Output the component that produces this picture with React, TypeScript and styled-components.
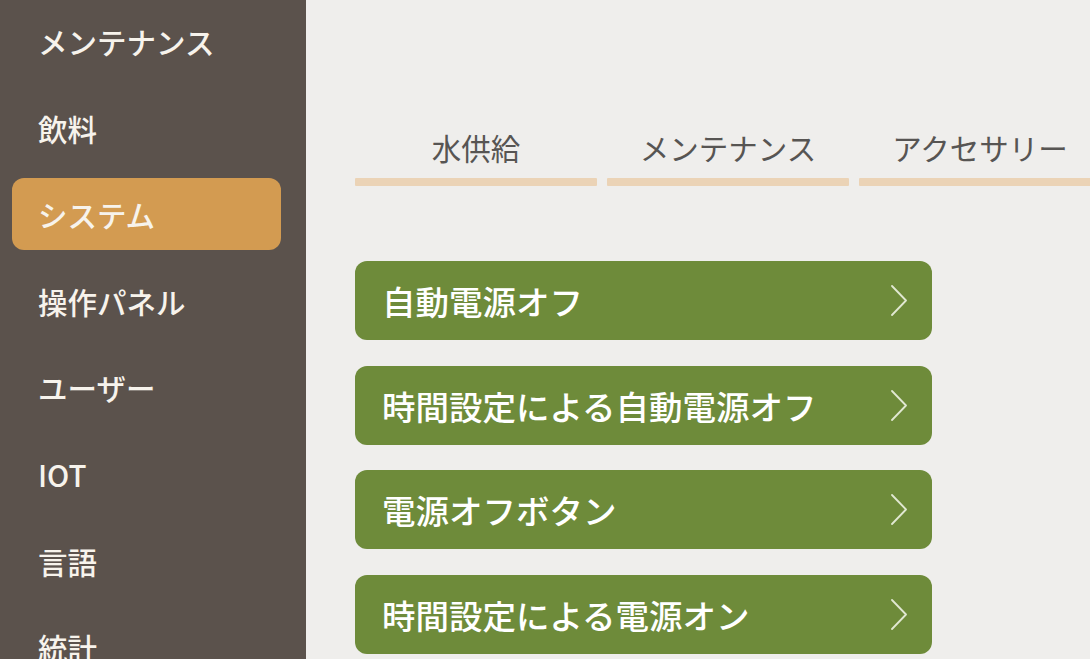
import React from 'react';
import styled, { createGlobalStyle } from 'styled-components';

const GlobalStyle = createGlobalStyle`
  html, body {
    margin: 0;
    padding: 0;
    height: 100%;
    overflow: hidden;
    background: #efeeec;
  }
  body {
    font-family: 'Noto Sans CJK JP', 'Noto Sans', sans-serif;
  }
`;

const Layout = styled.div`
  display: flex;
  height: 100vh;
`;

const Sidebar = styled.nav`
  flex: 0 0 306px;
  background: #5b524c;
  padding: 5px 25px 0 12px;
  box-sizing: border-box;
  display: flex;
  flex-direction: column;
  gap: 14.6px;
  overflow: hidden;
`;

const NavItem = styled.div<{ $active?: boolean }>`
  flex: 0 0 72px;
  display: flex;
  align-items: center;
  padding-left: 26px;
  border-radius: 12px;
  background: ${(p) => (p.$active ? '#d39b51' : 'transparent')};
  color: #f7f3ec;
  font-size: 29.5px;
  font-weight: 500;
  white-space: nowrap;
`;

const Main = styled.main`
  flex: 1;
  min-width: 0;
  padding: 127px 0 0 49px;
  overflow: hidden;
`;

const Tabs = styled.div`
  display: grid;
  grid-template-columns: repeat(3, 242px);
  column-gap: 10px;
  width: max-content;
`;

const Tab = styled.div`
  display: flex;
  flex-direction: column;
  align-items: center;
`;

const TabLabel = styled.span`
  font-size: 29.5px;
  line-height: 40px;
  color: #575553;
  white-space: nowrap;
`;

const TabLine = styled.div`
  align-self: stretch;
  height: 8px;
  margin-top: 11px;
  border-radius: 1px;
  background: #ebd3b6;
`;

const MenuList = styled.div`
  display: flex;
  flex-direction: column;
  gap: 25.5px;
  margin-top: 75px;
  width: 577px;
`;

const MenuButton = styled.button`
  height: 79px;
  display: flex;
  align-items: center;
  justify-content: space-between;
  padding: 0 25px 0 27px;
  border: none;
  border-radius: 12px;
  background: #6e8b3a;
  color: #ffffff;
  font-family: inherit;
  font-size: 33.5px;
  font-weight: 500;
  cursor: pointer;
  text-align: left;
`;

const Chevron = () => (
  <svg width="16" height="31" viewBox="0 0 16 31" fill="none">
    <path d="M1 1 L15 15.5 L1 30" stroke="#e1e8d2" strokeWidth="1.8" strokeLinecap="round" strokeLinejoin="round" />
  </svg>
);

const navItems = ['メンテナンス', '飲料', 'システム', '操作パネル', 'ユーザー', 'IOT', '言語', '統計'];
const tabs = ['水供給', 'メンテナンス', 'アクセサリー'];
const menu = ['自動電源オフ', '時間設定による自動電源オフ', '電源オフボタン', '時間設定による電源オン'];

const App = () => {
  return (
    <Layout>
      <GlobalStyle />
      <Sidebar>
        {navItems.map((item) => (
          <NavItem key={item} $active={item === 'システム'}>
            {item}
          </NavItem>
        ))}
      </Sidebar>
      <Main>
        <Tabs>
          {tabs.map((t) => (
            <Tab key={t}>
              <TabLabel>{t}</TabLabel>
              <TabLine />
            </Tab>
          ))}
        </Tabs>
        <MenuList>
          {menu.map((m) => (
            <MenuButton key={m}>
              <span>{m}</span>
              <Chevron />
            </MenuButton>
          ))}
        </MenuList>
      </Main>
    </Layout>
  );
};

export default App;
